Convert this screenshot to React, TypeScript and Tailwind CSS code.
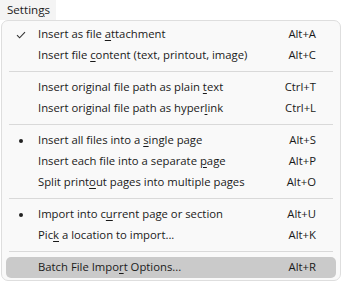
import { Fragment } from "react";

type Item =
  | { sep: true }
  | { label: string; keys: string; mark?: "check" | "dot"; active?: boolean };

const items: Item[] = [
  { label: "Insert as file &attachment", keys: "Alt+A", mark: "check" },
  { label: "Insert file &content (text, printout, image)", keys: "Alt+C" },
  { sep: true },
  { label: "Insert original file path as plain &text", keys: "Ctrl+T" },
  { label: "Insert original file path as hyper&link", keys: "Ctrl+L" },
  { sep: true },
  { label: "Insert all files into a &single page", keys: "Alt+S", mark: "dot" },
  { label: "Insert each file into a separate &page", keys: "Alt+P" },
  { label: "Split print&out pages into multiple pages", keys: "Alt+O" },
  { sep: true },
  { label: "Import into c&urrent page or section", keys: "Alt+U", mark: "dot" },
  { label: "Pic&k a location to import...", keys: "Alt+K" },
  { sep: true },
  { label: "Batch File Impo&rt Options...", keys: "Alt+R", active: true },
];

// "&" marks the access key letter
function Label({ text }: { text: string }) {
  const i = text.indexOf("&");
  if (i < 0) return <>{text}</>;
  return (
    <>
      {text.slice(0, i)}
      <u className="underline-offset-[2px]">{text[i + 1]}</u>
      {text.slice(i + 2)}
    </>
  );
}

function Check() {
  return (
    <svg width="10" height="8" viewBox="0 0 10 8" fill="none">
      <path d="M1 4.2 L3.6 6.8 L9 1.2" stroke="#333" strokeWidth="1.1" />
    </svg>
  );
}

export default function App() {
  return (
    <div
      className="w-[342px] h-[282px] bg-white text-[11.3px] text-[#1a1a1a] overflow-hidden"
      style={{ fontFamily: '"Open Sans", "Noto Sans", sans-serif' }}
    >
      <div className="h-[20px] flex">
        <div className="bg-[#f4f4f4] pl-[7px] pr-[6px] leading-[19px] text-[11.6px]">
          Settin<u className="underline-offset-[2px]">g</u>s
        </div>
      </div>
      <div className="mx-[1px] h-[261px] border border-[#dedede] rounded-[7px] bg-[#f9f9f9] pt-[3px]">
        {items.map((it, idx) => (
          <Fragment key={idx}>
            {"sep" in it ? (
              <div className="h-[11px] flex items-center px-[7px]">
                <div className="h-[1px] w-full bg-[#d9d9d9]" />
              </div>
            ) : (
              <div
                className={
                  "mx-[4px] h-[21px] flex items-center pr-[20px] rounded-[5px] " +
                  (it.active ? "bg-[#cacaca]" : "")
                }
              >
                <div className="w-[32px] flex justify-center pr-[2px]">
                  {it.mark === "check" && <Check />}
                  {it.mark === "dot" && (
                    <div className="w-[4px] h-[4px] rounded-full bg-[#222]" />
                  )}
                </div>
                <div className="flex-1 whitespace-nowrap">
                  <Label text={it.label} />
                </div>
                <div className="whitespace-nowrap">{it.keys}</div>
              </div>
            )}
          </Fragment>
        ))}
      </div>
    </div>
  );
}
